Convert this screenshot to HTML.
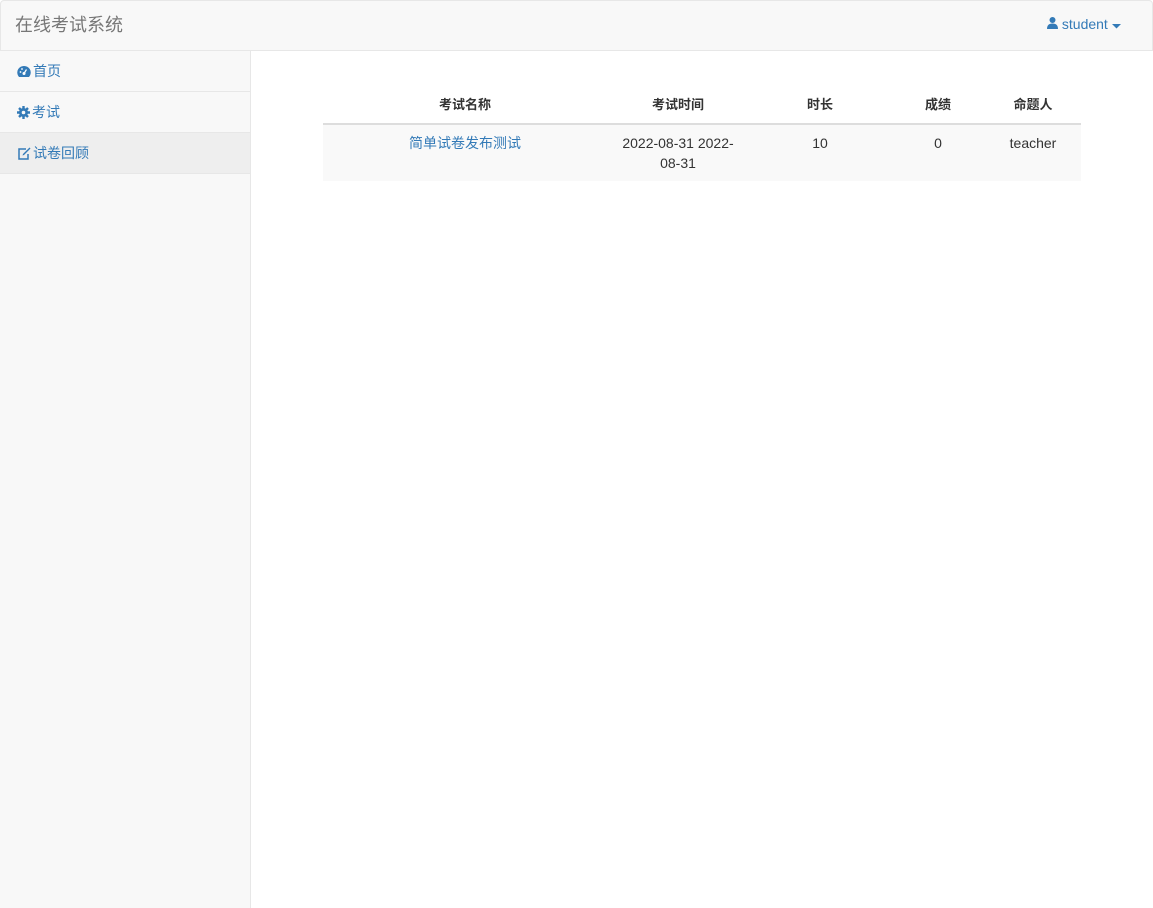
<!DOCTYPE html>
<html><head><meta charset="utf-8"><style>
*{box-sizing:border-box;margin:0;padding:0}
body{width:1153px;height:908px;background:#fff;font-family:"Liberation Sans","Noto Sans CJK SC",sans-serif;font-size:14px;color:#333;position:relative;overflow:hidden}
.nav{position:absolute;left:0;top:0;width:1153px;height:51px;background:#f8f8f8;border:1px solid #e7e7e7;border-radius:4px 4px 0 0}
.brand{position:absolute;left:14px;top:10px;font-size:18px;color:#777}
.user{position:absolute;left:1046px;top:15px;color:#337ab7;font-size:14px}
.side{position:absolute;left:0;top:51px;width:251px;height:857px;background:#f8f8f8;border-right:1px solid #e7e7e7}
.item{height:41px;border-bottom:1px solid #e7e7e7;padding:10px 0 0 17px;color:#337ab7}
.item.act{background:#eee}
.item svg{vertical-align:-2px;margin-right:2px}
table{position:absolute;left:323px;top:87px;width:758px;border-collapse:collapse}
th{font-weight:bold;height:37px;border-bottom:2px solid #ddd;vertical-align:bottom;padding:8px;font-size:13px;line-height:20px}
td{background:#f9f9f9;text-align:center;vertical-align:top;padding:8px;line-height:20px;height:56px}
a{color:#337ab7;text-decoration:none}
</style></head><body>
<div class="nav"><div class="brand">在线考试系统</div>
<div class="user"><svg width="11" height="12" viewBox="0 0 11 12"><circle cx="5.5" cy="3" r="3" fill="#337ab7"/><path d="M0 12 Q0 6.5 5.5 6.5 Q11 6.5 11 12Z" fill="#337ab7"/></svg> student <svg width="9" height="6" viewBox="0 0 9 6"><path d="M0 1H9L4.5 5.5Z" fill="#337ab7"/></svg></div></div>
<div class="side">
<div class="item"><svg width="14" height="13" viewBox="0 0 14 13"><path d="M7 1A6.5 6.5 0 0 0 1 10.5L2 12H12L13 10.5A6.5 6.5 0 0 0 7 1Z" fill="#337ab7"/><circle cx="7" cy="8.5" r="1.5" fill="#fff"/><path d="M7 8.5L9.5 4.5" stroke="#fff" stroke-width="1.2"/><circle cx="3.5" cy="7" r=".9" fill="#fff"/><circle cx="5" cy="4" r=".9" fill="#fff"/></svg>首页</div>
<div class="item"><svg width="13" height="13" viewBox="0 0 13 13"><circle cx="6.5" cy="6.5" r="4.5" fill="#337ab7"/><path d="M6.5 0V13M0 6.5H13M2 2L11 11M11 2L2 11" stroke="#337ab7" stroke-width="2.4"/><circle cx="6.5" cy="6.5" r="1.8" fill="#f8f8f8"/></svg>考试</div>
<div class="item act"><svg width="14" height="13" viewBox="0 0 14 13"><path d="M9 2H2V12H11V7" fill="none" stroke="#337ab7" stroke-width="1.5"/><path d="M12.5 0.5L6 7L5.5 8.5L7 8L13.5 1.5Z" fill="#337ab7"/></svg>试卷回顾</div>
</div>
<table><tr><th style="width:284px">考试名称</th><th style="width:142px">考试时间</th><th style="width:142px">时长</th><th style="width:94px">成绩</th><th>命题人</th></tr>
<tr><td><a>简单试卷发布测试</a></td><td>2022-08-31 2022-08-31</td><td>10</td><td>0</td><td>teacher</td></tr></table>
</body></html>
